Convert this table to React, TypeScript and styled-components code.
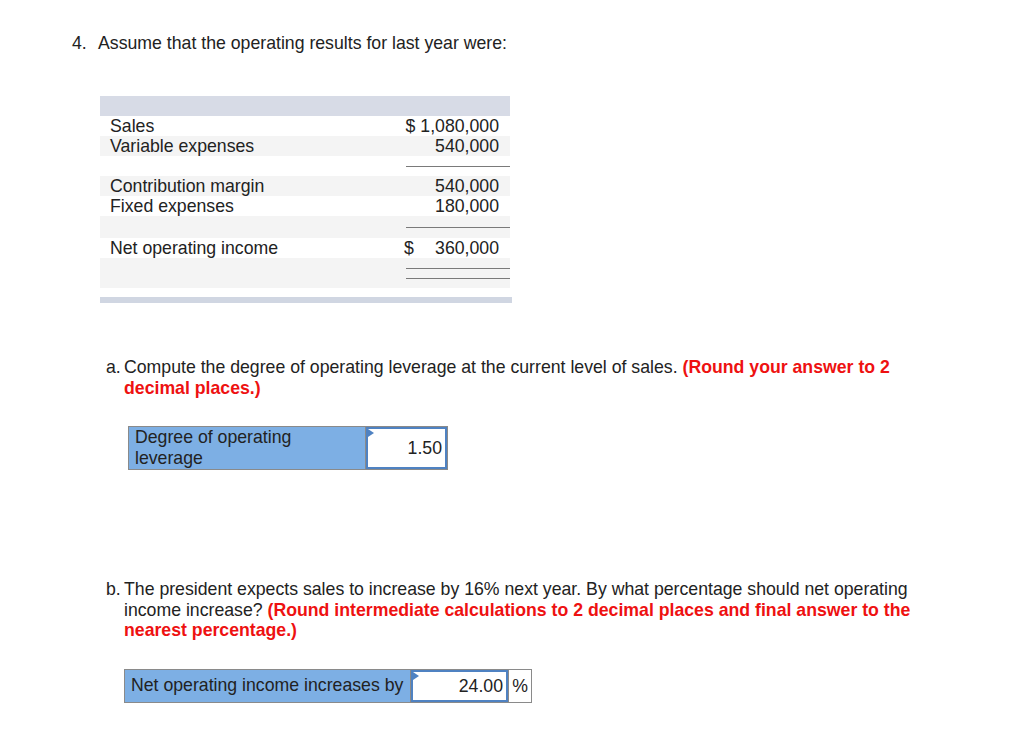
import React from 'react';
import styled, { createGlobalStyle } from 'styled-components';

const GlobalStyle = createGlobalStyle`
  body {
    margin: 0;
    background: #ffffff;
    font-family: "Liberation Sans", Arial, sans-serif;
    color: #222222;
  }
`;

const Page = styled.div`
  padding: 33px 0 40px 72px;
  font-size: 17.7px;
  line-height: 20px;
`;

const Heading = styled.div`
  display: flex;
`;

const Num = styled.span`
  width: 26px;
`;

const Table = styled.div`
  margin: 43px 0 0 28px;
  width: 410px;
`;

const HeadBar = styled.div`
  height: 20px;
  background: #d7dbe6;
`;

const Row = styled.div<{ $shade?: boolean; $h?: number }>`
  display: flex;
  align-items: center;
  height: ${p => p.$h || 20}px;
  background: ${p => (p.$shade ? '#f4f4f4' : '#ffffff')};
`;

const Label = styled.div`
  flex: 1;
  padding-left: 10px;
`;

const Value = styled.div<{ $split?: boolean }>`
  width: 95px;
  padding-right: 11px;
  white-space: nowrap;
  display: flex;
  justify-content: ${p => (p.$split ? 'space-between' : 'flex-end')};
`;

const Rules = styled.div`
  margin-left: auto;
  width: 104px;
  display: flex;
  flex-direction: column;
  gap: 9px;
`;

const Rule = styled.div`
  height: 1px;
  background: #7a7a7a;
`;

const BottomBar = styled.div`
  margin-top: 9px;
  height: 6px;
  width: 412px;
  background: #d0d6e2;
`;

const Part = styled.div<{ $top: number }>`
  margin: ${p => p.$top}px 0 0 34px;
  width: 810px;
  display: flex;
  line-height: 20.5px;
`;

const Letter = styled.span`
  width: 18px;
  flex-shrink: 0;
`;

const Red = styled.span`
  color: #ee1111;
  font-weight: bold;
`;

const Answer = styled.div<{ $left: number; $h: number; $top: number }>`
  margin: ${p => p.$top}px 0 0 ${p => p.$left}px;
  display: inline-flex;
  height: ${p => p.$h}px;
  border: 1px solid #8a8a8a;
  box-sizing: border-box;
`;

const AnswerLabel = styled.div<{ $w: number }>`
  width: ${p => p.$w}px;
  background: #7dafe4;
  padding: 0 6px;
  box-sizing: border-box;
  display: flex;
  align-items: center;
  border-right: 1px solid #8a8a8a;
  line-height: 21px;
  white-space: nowrap;
  overflow: hidden;
`;

const LabelText = styled.span`
  white-space: normal;
`;

const Input = styled.div<{ $w: number }>`
  position: relative;
  width: ${p => p.$w}px;
  border: 2px solid #4f82c2;
  box-sizing: border-box;
  display: flex;
  align-items: center;
  justify-content: flex-end;
  padding-right: 3px;
  &::before {
    content: '';
    position: absolute;
    left: 0;
    top: 0;
    border-top: 4px solid transparent;
    border-bottom: 4px solid transparent;
    border-left: 6px solid #4f82c2;
  }
`;

const Unit = styled.div`
  width: 22px;
  display: flex;
  align-items: center;
  justify-content: center;
  border-left: 1px solid #8a8a8a;
`;

const Block = styled.div``;

export default function App() {
  return (
    <Page>
      <GlobalStyle />
      <Heading>
        <Num>4.</Num>
        <span>Assume that the operating results for last year were:</span>
      </Heading>

      <Table>
        <HeadBar />
        <Row>
          <Label>Sales</Label>
          <Value>$ 1,080,000</Value>
        </Row>
        <Row $shade>
          <Label>Variable expenses</Label>
          <Value>540,000</Value>
        </Row>
        <Row>
          <Rules>
            <Rule />
          </Rules>
        </Row>
        <Row $shade>
          <Label>Contribution margin</Label>
          <Value>540,000</Value>
        </Row>
        <Row>
          <Label>Fixed expenses</Label>
          <Value>180,000</Value>
        </Row>
        <Row $shade $h={22}>
          <Rules>
            <Rule />
          </Rules>
        </Row>
        <Row>
          <Label>Net operating income</Label>
          <Value $split>
            <span>$</span>
            <span>360,000</span>
          </Value>
        </Row>
        <Row $shade $h={30}>
          <Rules>
            <Rule />
            <Rule />
          </Rules>
        </Row>
        <BottomBar />
      </Table>

      <Part $top={54}>
        <Letter>a.</Letter>
        <span>
          Compute the degree of operating leverage at the current level of sales.{' '}
          <Red>(Round your answer to 2 decimal places.)</Red>
        </span>
      </Part>
      <Block>
        <Answer $left={56} $h={44} $top={28}>
          <AnswerLabel $w={237}>
            <LabelText>Degree of operating leverage</LabelText>
          </AnswerLabel>
          <Input $w={81}>1.50</Input>
        </Answer>
      </Block>

      <Part $top={109}>
        <Letter>b.</Letter>
        <span>
          The president expects sales to increase by 16% next year. By what percentage should net
          operating income increase?{' '}
          <Red>
            (Round intermediate calculations to 2 decimal places and final answer to the nearest
            percentage.)
          </Red>
        </span>
      </Part>
      <Block>
        <Answer $left={52} $h={34} $top={28}>
          <AnswerLabel $w={286}>Net operating income increases by</AnswerLabel>
          <Input $w={97}>24.00</Input>
          <Unit>%</Unit>
        </Answer>
      </Block>
    </Page>
  );
}
